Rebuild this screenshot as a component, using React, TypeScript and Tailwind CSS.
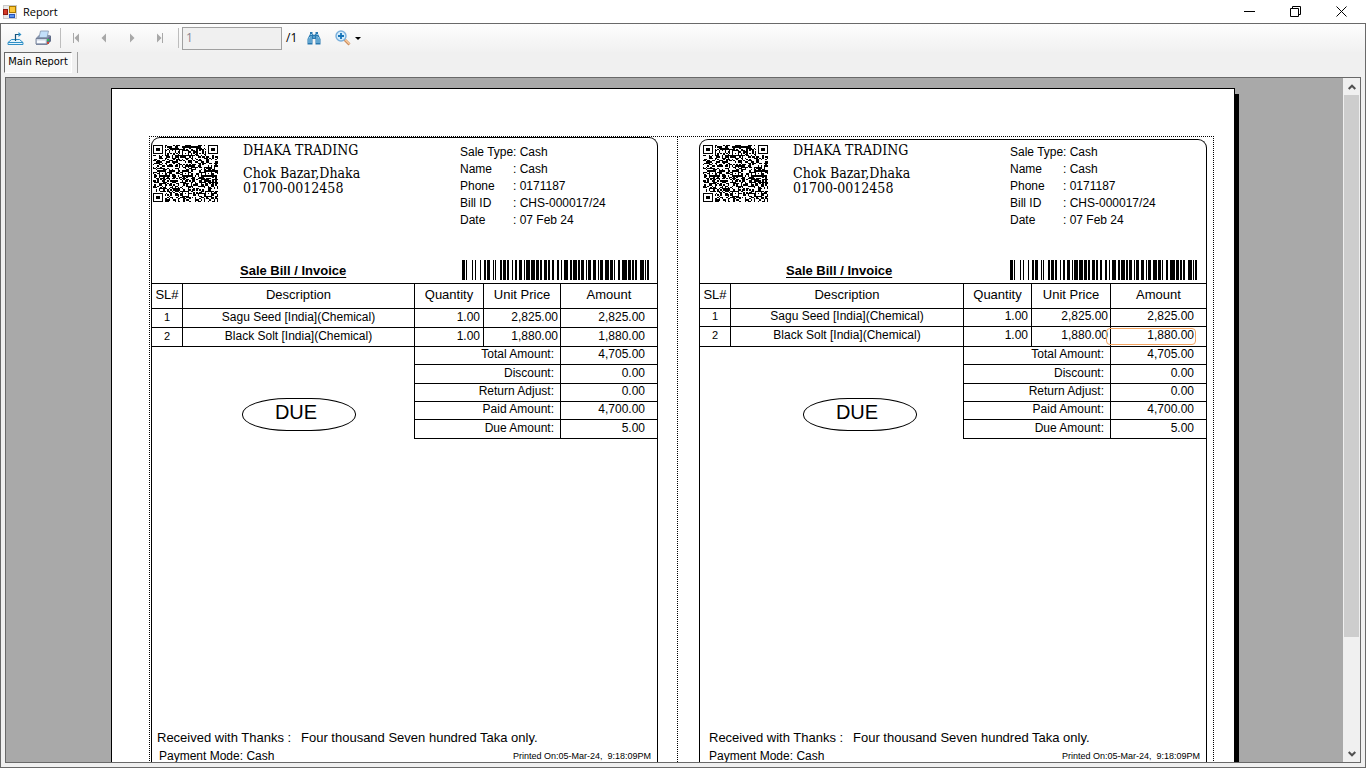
import React from "react";

type InvoiceLayout = {
  frame: string;
  header: string;
  title: string;
  columns: [string, string, string];
  firstRow: string;
  secondRow: string;
  stamp: string;
  footer: string;
  payment: string;
  highlight: boolean;
};

const ITEMS = [
  { sl: 1, name: "Sagu Seed [India](Chemical)", qty: "1.00", price: "2,825.00", amount: "2,825.00" },
  { sl: 2, name: "Black Solt [India](Chemical)", qty: "1.00", price: "1,880.00", amount: "1,880.00" },
];

const SUMMARY = [
  { label: "Total Amount:", value: "4,705.00", height: "h-[18px]" },
  { label: "Discount:", value: "0.00", height: "h-[19px]" },
  { label: "Return Adjust:", value: "0.00", height: "h-[18px]" },
  { label: "Paid Amount:", value: "4,700.00", height: "h-[18px]" },
  { label: "Due Amount:", value: "5.00", height: "h-[20px]" },
];

const META = [
  ["Sale Type", "Cash"],
  ["Name", "Cash"],
  ["Phone", "0171187"],
  ["Bill ID", "CHS-000017/24"],
  ["Date", "07 Feb 24"],
];

const LEFT: InvoiceLayout = {
  frame: "mr-[19px] ml-px",
  header: "pt-[5px] pl-px",
  title: "pr-2 pl-[88px]",
  columns: ["w-[69px]", "w-[77px]", "w-[97px]"],
  firstRow: "h-[19px]",
  secondRow: "h-[19px]",
  stamp: "ml-[90px]",
  footer: "pl-[5px]",
  payment: "pl-[2px]",
  highlight: false,
};

const RIGHT: InvoiceLayout = {
  frame: "mr-[6px] ml-[21px] mt-[2px]",
  header: "pt-[3px] pl-[3px]",
  title: "pr-[9px] pl-[86px]",
  columns: ["w-[68px]", "w-[79px]", "w-[96px]"],
  firstRow: "h-[18px]",
  secondRow: "h-[20px]",
  stamp: "ml-[103px]",
  footer: "pl-[9px]",
  payment: "",
  highlight: true,
};

/* [offset, width] of every bar in the bill number code */
const BARS: [number, number][] = [
  [0, 3], [4, 1], [10, 1], [13, 1], [18, 1], [22, 2], [25, 3], [31, 1], [33, 1], [38, 2], [41, 3],
  [45, 2], [50, 1], [53, 2], [57, 3], [62, 1], [64, 4], [69, 4], [74, 3], [78, 2], [82, 3], [86, 2],
  [90, 2], [95, 2], [99, 1], [102, 4], [108, 2], [111, 4], [116, 2], [119, 3], [124, 1], [126, 3],
  [131, 3], [136, 1], [138, 3], [143, 4], [148, 3], [152, 1], [156, 2], [160, 5], [166, 3], [170, 2],
  [173, 2], [178, 4], [183, 1], [185, 2],
];

const QR_WIDTH = 65;
const QR_HEIGHT = 57;

function buildQr(): string {
  const n = 45;
  const grid: boolean[][] = [];
  let state = 90217;
  const next = () => {
    state = (state + 0x6d2b79f5) | 0;
    let t = Math.imul(state ^ (state >>> 15), 1 | state);
    t = (t + Math.imul(t ^ (t >>> 7), 61 | t)) ^ t;
    return ((t ^ (t >>> 14)) >>> 0) / 4294967296;
  };
  for (let y = 0; y < n; y++) {
    grid.push([]);
    for (let x = 0; x < n; x++) grid[y].push(next() < 0.5);
  }
  const square = (cx: number, cy: number, dark: (d: number) => boolean, reach: number) => {
    for (let y = cy - reach; y <= cy + reach; y++)
      for (let x = cx - reach; x <= cx + reach; x++)
        if (x >= 0 && y >= 0 && x < n && y < n)
          grid[y][x] = dark(Math.max(Math.abs(x - cx), Math.abs(y - cy)));
  };
  for (let i = 8; i < n - 8; i++) {
    grid[6][i] = i % 2 === 0;
    grid[i][6] = i % 2 === 0;
  }
  [[22, 6], [6, 22], [22, 22], [38, 22], [22, 38], [38, 38]].forEach(([x, y]) =>
    square(x, y, (d) => d !== 1, 2),
  );
  [[3, 3], [n - 4, 3], [3, n - 4]].forEach(([x, y]) => square(x, y, (d) => d < 2 || d === 3, 4));

  const px = (v: number) => Math.round((v * QR_WIDTH) / n);
  const py = (v: number) => Math.round((v * QR_HEIGHT) / n);
  let path = "";
  grid.forEach((row, y) =>
    row.forEach((on, x) => {
      if (on) path += `M${px(x)} ${py(y)}H${px(x + 1)}V${py(y + 1)}H${px(x)}z`;
    }),
  );
  return path;
}

const QR_PATH = buildQr();

function QrCode() {
  return (
    <svg
      className="mt-[2px] h-[57px] w-[65px] shrink-0"
      viewBox="0 0 65 57"
      shapeRendering="crispEdges"
      role="img"
      aria-label="QR code"
    >
      <path d={QR_PATH} />
    </svg>
  );
}

function Barcode() {
  return (
    <svg className="h-5 w-[187px] shrink-0" viewBox="0 0 187 20" shapeRendering="crispEdges" role="img" aria-label="Barcode">
      {BARS.map(([x, w]) => (
        <rect key={x} x={x} width={w} height="20" />
      ))}
    </svg>
  );
}

function Invoice({ layout }: { layout: InvoiceLayout }) {
  const heading = "border-t border-l border-black p-0 pb-[2px] font-normal";
  const line = "border-t border-l border-black p-0 pb-[3px]";
  const rowHeights = [layout.firstRow, layout.secondRow];
  return (
    <article
      className={`rounded-t-[9px] border border-b-0 border-black font-['Liberation_Sans',Arial,sans-serif] text-xs ${layout.frame}`}
    >
      <header className={`flex ${layout.header}`}>
        <QrCode />
        <div className="w-[242px] pl-[25px] font-['DejaVu_Serif_Condensed','DejaVu_Serif',serif] text-[14px] leading-[15px]">
          <h1 className="mb-2">DHAKA TRADING</h1>
          <p>Chok Bazar,Dhaka</p>
          <p>01700-0012458</p>
        </div>
        <dl className="grid h-[117px] flex-1 grid-cols-[53px_1fr] content-start pt-px leading-[17px]">
          {META.map(([k, v]) => (
            <React.Fragment key={k}>
              <dt className="whitespace-nowrap">{k}</dt>
              <dd className="whitespace-nowrap">: {v}</dd>
            </React.Fragment>
          ))}
        </dl>
      </header>
      <div className={`flex h-[23px] items-start justify-between ${layout.title}`}>
        <h2 className="mt-[3px] text-[13px] leading-4 font-bold underline underline-offset-2">Sale Bill / Invoice</h2>
        <Barcode />
      </div>

      <table className="w-full table-fixed border-separate border-spacing-0 leading-[14px]">
        <colgroup>
          <col className="w-[30px]" />
          <col />
          <col className={layout.columns[0]} />
          <col className={layout.columns[1]} />
          <col className={layout.columns[2]} />
        </colgroup>
        <thead>
          <tr className="h-[25px] text-[13px]">
            <th className="border-t border-black p-0 pb-[2px] font-normal">SL#</th>
            <th className={heading}>Description</th>
            <th className={heading}>Quantity</th>
            <th className={heading}>Unit Price</th>
            <th className={heading}>Amount</th>
          </tr>
        </thead>
        <tbody>
          {ITEMS.map((item, i) => (
            <tr key={item.sl} className={rowHeights[i]}>
              <td className="border-t border-black p-0 pb-[3px] text-center text-[11px]">{item.sl}</td>
              <td className={`${line} text-center`}>{item.name}</td>
              <td className={`${line} pr-[3px] text-right`}>{item.qty}</td>
              <td className={`${line} pr-[2px] text-right`}>{item.price}</td>
              <td className={`${line} relative pr-3 text-right`}>
                {item.amount}
                {layout.highlight && i === 1 && (
                  <span className="absolute top-px right-[10px] -left-[5px] h-[17px] rounded-[4px] border border-[#f4a460]" />
                )}
              </td>
            </tr>
          ))}
          {SUMMARY.map((row, i) => (
            <tr key={row.label} className={row.height}>
              {i === 0 && (
                <td colSpan={2} rowSpan={5} className="border-t border-black p-0 align-top">
                  <div
                    className={`mt-[51px] flex h-[33px] w-[114px] justify-center rounded-[45px/16px] border border-black pr-[6px] text-[20px] leading-[27px] ${layout.stamp}`}
                  >
                    DUE
                  </div>
                </td>
              )}
              <td colSpan={2} className={`${line} pr-[6px] text-right ${i === 4 ? "border-b" : ""}`}>
                {row.label}
              </td>
              <td className={`${line} pr-3 text-right ${i === 4 ? "border-b" : ""}`}>{row.value}</td>
            </tr>
          ))}
        </tbody>
      </table>

      <footer className={`mt-[291px] pr-[6px] pb-8 leading-4 ${layout.footer}`}>
        <p className="flex text-[13px]">
          <span className="w-[144px]">Received with Thanks :</span>
          <span>Four thousand Seven hundred Taka only.</span>
        </p>
        <p className={`mt-[2px] flex justify-between ${layout.payment}`}>
          <span>Payment Mode: Cash</span>
          <span className="text-[9px] whitespace-pre">Printed On:05-Mar-24,  9:18:09PM</span>
        </p>
      </footer>
    </article>
  );
}

function AppIcon() {
  return (
    <svg className="h-[14px] w-[14px]" viewBox="0 0 14 14" shapeRendering="crispEdges">
      <path d="M0 0h14v14H0z" fill="#c9c9c9" />
      <path d="M1 1h12v12H1z" fill="#e9e9e9" />
      <path d="M0 4h5v6H0z" fill="#8f1a12" />
      <path d="M1 5h3v4H1z" fill="#d43a26" />
      <path d="M6 1h7v7H6z" fill="#a87800" />
      <path d="M7 2h5v5H7z" fill="#fcc737" />
      <path d="M6 9h6v4H6z" fill="#2a55b8" />
      <path d="M7 10h4v2H7z" fill="#5b93ef" />
    </svg>
  );
}

function ExportIcon() {
  return (
    <svg className="h-4 w-[17px]" viewBox="0 0 17 16" fill="none">
      <path d="M4.5 9.500L1 12.500v2h15v-2L12.500 9.500z" fill="#e4f4fc" stroke="#2f8fc6" />
      <path d="M1 12.500h15" stroke="#2f8fc6" />
      <path d="M8.500 11V4.500H13" stroke="#16557e" strokeWidth="1.200" />
      <path d="M11.500 2l3 2.500-3 2.500z" fill="#2f8fc6" />
    </svg>
  );
}

function PrinterIcon() {
  return (
    <svg className="h-4 w-[17px]" viewBox="0 0 17 16">
      <path d="M1 8l3-3h10.500L16 6v5l-4 4H1z" fill="#8793ac" />
      <path d="M5.500 1h8L12 7.500H4z" fill="#c3e0fa" stroke="#8495ad" strokeWidth=".8" />
      <path d="M1 8.500h11V14H1z" fill="#cfd8e6" stroke="#66728c" strokeWidth=".8" />
      <path d="M2 10.500h8.500V13H2z" fill="#f8fbff" />
      <path d="M12 9l4-3.500V11l-4 3.500z" fill="#5f6b87" />
      <path d="M12 9h2v2h-2z" fill="#2fba54" />
      <path d="M12 12h2v2h-2z" fill="#d04a36" />
    </svg>
  );
}

function BinocularsIcon() {
  return (
    <svg className="h-[14px] w-[14px]" viewBox="0 0 14 14">
      <path d="M3 1h2.500v2L7 4l1.500-1V1H11v2l2.500 5v5.500h-5V8h-3v5.500h-5V8L3 3z" fill="#2878b0" />
      <path d="M3.500 3.500h1.500M2.500 6L2 8v4M9.500 3.500H11M11.500 6l.5 2v4M4 5v7M10 5v7" stroke="#a8dcf8" strokeWidth=".9" fill="none" />
      <path d="M6.500 5h1v2h-1z" fill="#86c5e8" />
    </svg>
  );
}

function ZoomIcon() {
  return (
    <svg className="h-4 w-4" viewBox="0 0 16 16">
      <path d="M9.500 9.500l5 5" stroke="#c98a5c" strokeWidth="2.800" />
      <path d="M10 9.500l4.500 4.500" stroke="#f9cc9c" strokeWidth="1.300" />
      <circle cx="6" cy="6" r="5" fill="#d4ecfb" stroke="#79afdc" strokeWidth="1.400" />
      <path d="M6 3v6M3 6h6" stroke="#1673b8" strokeWidth="1.800" />
    </svg>
  );
}

function NavIcon({ kind }: { kind: "first" | "prev" | "next" | "last" }) {
  const flip = kind === "next" || kind === "last";
  return (
    <svg className={flip ? "h-[10px] w-2 -scale-x-100" : "h-[10px] w-2"} viewBox="0 0 8 10" fill="#a8a8a8">
      {kind === "first" || kind === "last" ? <path d="M1 0h1v10H1zM7 .5v9L2.500 5z" /> : <path d="M6 .5v9L1.500 5z" />}
    </svg>
  );
}

function ToolButton({ label, className, children }: { label: string; className: string; children: React.ReactNode }) {
  return (
    <button type="button" aria-label={label} className={`flex h-6 items-center justify-center ${className}`}>
      {children}
    </button>
  );
}

export default function App() {
  return (
    <div className="flex h-screen flex-col overflow-hidden bg-white font-['Open_Sans','Noto_Sans',sans-serif] text-black">
      <div className="flex h-[23px] shrink-0 items-center justify-between pr-[2px] pl-[3px]">
        <div className="flex items-center gap-[6px] text-[11px] leading-4">
          <AppIcon />
          <span>Report</span>
        </div>
        <div className="flex">
          <button type="button" aria-label="Minimize" className="flex h-5 w-[46px] items-center justify-center">
            <svg className="h-[11px] w-[11px]" viewBox="0 0 11 11"><path d="M0 5.500h11" stroke="#000" /></svg>
          </button>
          <button type="button" aria-label="Restore" className="flex h-5 w-[46px] items-center justify-center">
            <svg className="h-[11px] w-[11px]" viewBox="0 0 11 11" fill="none" stroke="#000">
              <path d="M.5 2.500h8v8h-8zM2.500 2.500v-2h8v8h-2" />
            </svg>
          </button>
          <button type="button" aria-label="Close" className="flex h-5 w-[46px] items-center justify-center">
            <svg className="h-[11px] w-[11px]" viewBox="0 0 11 11" stroke="#000"><path d="M.5.500l10 10M10.500.500l-10 10" /></svg>
          </button>
        </div>
      </div>

      <main className="flex min-h-0 flex-1 flex-col border border-[#696969] bg-[#f0f0f0]">
        <div className="flex h-7 shrink-0 items-center bg-linear-to-b from-[#fdfdfd] to-[#f1f1f1] pl-1">
          <ToolButton label="Export report" className="w-5"><ExportIcon /></ToolButton>
          <ToolButton label="Print report" className="ml-2 w-5"><PrinterIcon /></ToolButton>
          <div className="ml-[7px] h-5 w-px bg-[#bdbdbd]" />
          <ToolButton label="First page" className="ml-[5px] w-5"><NavIcon kind="first" /></ToolButton>
          <ToolButton label="Previous page" className="ml-2 w-5"><NavIcon kind="prev" /></ToolButton>
          <ToolButton label="Next page" className="ml-2 w-5"><NavIcon kind="next" /></ToolButton>
          <ToolButton label="Last page" className="ml-2 w-5"><NavIcon kind="last" /></ToolButton>
          <div className="ml-2 h-5 w-px bg-[#bdbdbd]" />
          <input
            aria-label="Page number"
            defaultValue="1"
            readOnly
            className="ml-[3px] h-[23px] w-[100px] border border-[#a0a0a0] bg-[#f0f0f0] px-[3px] pb-[2px] text-xs text-[#8c8490] outline-none"
          />
          <span className="ml-1 w-[18px] text-xs">/1</span>
          <ToolButton label="Find text" className="w-5"><BinocularsIcon /></ToolButton>
          <ToolButton label="Zoom" className="ml-2 w-8 gap-1">
            <ZoomIcon />
            <svg className="h-[3px] w-[6px]" viewBox="0 0 6 3"><path d="M0 0h6L3 3z" /></svg>
          </ToolButton>
        </div>

        <div className="flex h-[25px] shrink-0 items-start pl-[3px]">
          <button
            type="button"
            className="h-[21px] w-[68px] border border-t-[#696969] border-r-white border-b-white border-l-[#696969] bg-[#f8f8f8] font-['DejaVu_Sans_Condensed','Noto_Sans',sans-serif] text-[11px] whitespace-nowrap"
          >
            Main Report
          </button>
          <div className="ml-[5px] h-[21px] w-px bg-[#a0a0a0]" />
        </div>

        <section className="mr-1 mb-1 ml-1 flex min-h-0 flex-1 overflow-hidden border border-[#696969] bg-[#a9a9a9]">
          <div className="min-w-0 flex-1 overflow-hidden pt-[10px] pr-[108px] pl-[105px]">
            <div className="border border-black bg-white pt-[47px] pr-5 pl-[37px] shadow-[4px_6px_0_#000]">
              <div className="grid grid-cols-[527fr_536fr] border border-dotted border-black">
                <Invoice layout={LEFT} />
                <div className="border-l border-dotted border-black">
                  <Invoice layout={RIGHT} />
                </div>
              </div>
            </div>
          </div>
          <div className="flex w-[17px] shrink-0 flex-col bg-[#f0f0f0]">
            <button type="button" aria-label="Scroll up" className="flex h-[17px] shrink-0 items-center justify-center">
              <svg className="h-[6px] w-2" viewBox="0 0 8 6" fill="none" stroke="#505050" strokeWidth="2"><path d="M.7 5L4 1.700 7.300 5" /></svg>
            </button>
            <div className="flex-1 px-px">
              <div className="h-5/6 bg-[#cdcdcd]" />
            </div>
            <button type="button" aria-label="Scroll down" className="flex h-[17px] shrink-0 items-center justify-center">
              <svg className="h-[6px] w-2" viewBox="0 0 8 6" fill="none" stroke="#505050" strokeWidth="2"><path d="M.7 1L4 4.300 7.300 1" /></svg>
            </button>
          </div>
        </section>
      </main>
    </div>
  );
}
